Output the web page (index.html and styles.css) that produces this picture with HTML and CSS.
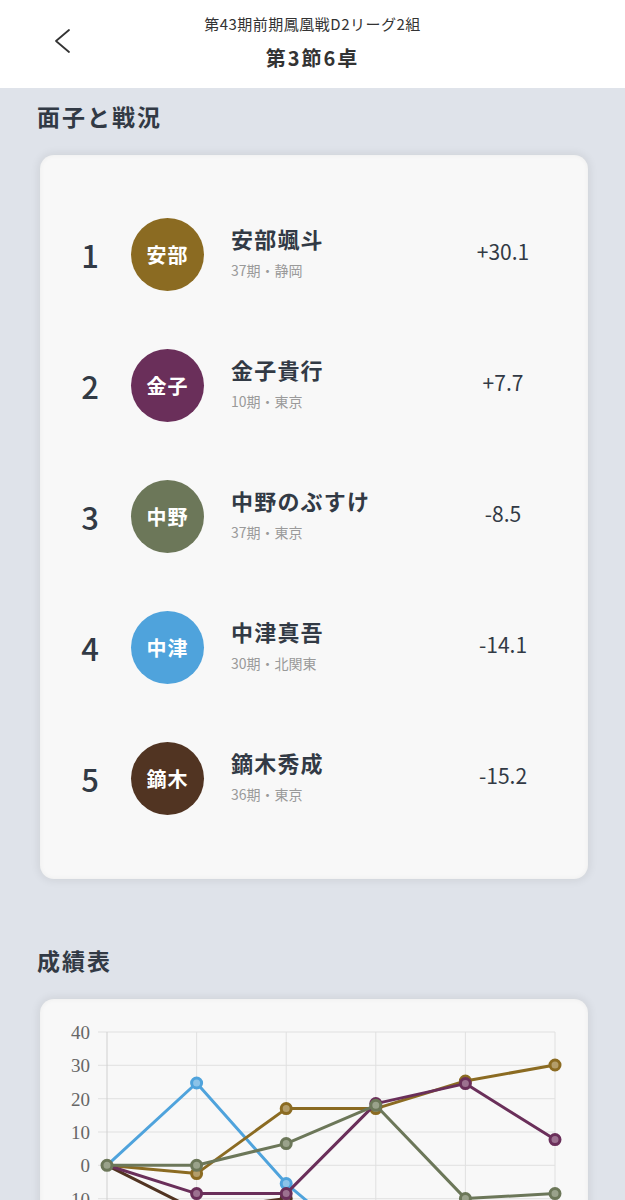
FILE: index.html
```html
<!DOCTYPE html>
<html lang="ja">
<head>
  <meta charset="UTF-8">
  <title>第3節6卓</title>
  <link rel="stylesheet" href="styles.css">
</head>
<body>

  <header class="top-bar">
    <a class="back" href="#">
      <svg width="24" height="26" viewBox="0 0 24 26">
        <path d="M19 2 L6 13 L19 24" fill="none" stroke="#333" stroke-width="1.8" stroke-linecap="round" stroke-linejoin="round"/>
      </svg>
    </a>
    <div class="titles">
      <p class="sub-title">第43期前期鳳凰戦D2リーグ2組</p>
      <h1 class="main-title">第3節6卓</h1>
    </div>
    <div></div>
  </header>

  <h2 class="section-title">面子と戦況</h2>
  <div class="card players">
    <div class="player">
      <span class="rank">1</span>
      <span class="avatar c-gold">安部</span>
      <div class="info">
        <p class="name">安部颯斗</p>
        <p class="meta">37期・静岡</p>
      </div>
      <span class="score">+30.1</span>
    </div>
    <div class="player">
      <span class="rank">2</span>
      <span class="avatar c-purple">金子</span>
      <div class="info">
        <p class="name">金子貴行</p>
        <p class="meta">10期・東京</p>
      </div>
      <span class="score">+7.7</span>
    </div>
    <div class="player">
      <span class="rank">3</span>
      <span class="avatar c-olive">中野</span>
      <div class="info">
        <p class="name">中野のぶすけ</p>
        <p class="meta">37期・東京</p>
      </div>
      <span class="score">-8.5</span>
    </div>
    <div class="player">
      <span class="rank">4</span>
      <span class="avatar c-blue">中津</span>
      <div class="info">
        <p class="name">中津真吾</p>
        <p class="meta">30期・北関東</p>
      </div>
      <span class="score">-14.1</span>
    </div>
    <div class="player">
      <span class="rank">5</span>
      <span class="avatar c-brown">鏑木</span>
      <div class="info">
        <p class="name">鏑木秀成</p>
        <p class="meta">36期・東京</p>
      </div>
      <span class="score">-15.2</span>
    </div>
  </div>

  <h2 class="section-title second">成績表</h2>
  <div class="card chart-card">
    <svg class="chart" width="549" height="340" viewBox="0 0 549 340">
      <g stroke="#e0e0e0" stroke-width="1">
        <line x1="58" y1="33" x2="515" y2="33"/>
        <line x1="58" y1="66.3" x2="515" y2="66.3"/>
        <line x1="58" y1="99.7" x2="515" y2="99.7"/>
        <line x1="58" y1="133" x2="515" y2="133"/>
        <line x1="58" y1="166.3" x2="515" y2="166.3"/>
        <line x1="58" y1="199.7" x2="515" y2="199.7"/>
        <line x1="58" y1="233" x2="515" y2="233"/>
        <line x1="58" y1="266.3" x2="515" y2="266.3"/>
        <line x1="58" y1="299.7" x2="515" y2="299.7"/>
        <line x1="156.6" y1="33" x2="156.6" y2="308"/>
        <line x1="246.2" y1="33" x2="246.2" y2="308"/>
        <line x1="335.8" y1="33" x2="335.8" y2="308"/>
        <line x1="425.4" y1="33" x2="425.4" y2="308"/>
        <line x1="515" y1="33" x2="515" y2="308"/>
      </g>
      <line x1="67" y1="33" x2="67" y2="308" stroke="#d0d0d0" stroke-width="1"/>
      <g class="y-labels">
        <text x="50" y="40">40</text>
        <text x="50" y="73.3">30</text>
        <text x="50" y="106.7">20</text>
        <text x="50" y="140">10</text>
        <text x="50" y="173.3">0</text>
        <text x="50" y="206.7">-10</text>
        <text x="50" y="240">-20</text>
        <text x="50" y="273.3">-30</text>
        <text x="50" y="306.7">-40</text>
      </g>

      <g class="series" stroke="#4fa3dc" fill="#8cc3e8">
        <polyline fill="none" points="67,166.3 156.6,84 246.2,184.6 335.8,259.6 425.4,233 515,213.3"/>
        <circle cx="156.6" cy="84" r="5"/>
        <circle cx="246.2" cy="184.6" r="5"/>
        <circle cx="335.8" cy="259.6" r="5"/>
        <circle cx="425.4" cy="233" r="5"/>
        <circle cx="515" cy="213.3" r="5"/>
      </g>
      <g class="series" stroke="#513422" fill="#8a776b">
        <polyline fill="none" points="67,166.3 156.6,211.3 246.2,199.6 335.8,251.3 425.4,232.3 515,217"/>
        <circle cx="156.6" cy="211.3" r="5"/>
        <circle cx="246.2" cy="199.6" r="5"/>
        <circle cx="335.8" cy="251.3" r="5"/>
        <circle cx="425.4" cy="232.3" r="5"/>
        <circle cx="515" cy="217" r="5"/>
      </g>
      <g class="series" stroke="#8b6b22" fill="#b39d6a">
        <polyline fill="none" points="67,166.3 156.6,174.6 246.2,109.6 335.8,109.6 425.4,82 515,66"/>
        <circle cx="156.6" cy="174.6" r="5"/>
        <circle cx="246.2" cy="109.6" r="5"/>
        <circle cx="335.8" cy="109.6" r="5"/>
        <circle cx="425.4" cy="82" r="5"/>
        <circle cx="515" cy="66" r="5"/>
      </g>
      <g class="series" stroke="#6a2f5a" fill="#9c7190">
        <polyline fill="none" points="67,166.3 156.6,194.6 246.2,194.6 335.8,104.6 425.4,84.6 515,140.6"/>
        <circle cx="156.6" cy="194.6" r="5"/>
        <circle cx="246.2" cy="194.6" r="5"/>
        <circle cx="335.8" cy="104.6" r="5"/>
        <circle cx="425.4" cy="84.6" r="5"/>
        <circle cx="515" cy="140.6" r="5"/>
      </g>
      <g class="series" stroke="#6c7759" fill="#9aa28b">
        <polyline fill="none" points="67,166.3 156.6,166.3 246.2,144.6 335.8,106.3 425.4,199.6 515,194.6"/>
        <circle cx="67" cy="166.3" r="5"/>
        <circle cx="156.6" cy="166.3" r="5"/>
        <circle cx="246.2" cy="144.6" r="5"/>
        <circle cx="335.8" cy="106.3" r="5"/>
        <circle cx="425.4" cy="199.6" r="5"/>
        <circle cx="515" cy="194.6" r="5"/>
      </g>
    </svg>
  </div>

</body>
</html>
```

FILE: styles.css
```css
body {
  margin: 0;
  background-color: #dfe3ea;
  font-family: "Noto Sans CJK JP", "Noto Sans", sans-serif;
  color: #323a45;
}
p, h1, h2 {
  margin: 0;
}
.top-bar {
  display: grid;
  grid-template-columns: 1fr auto 1fr;
  align-items: center;
  height: 88px;
  background: white;
}
.back {
  display: block;
  width: 24px;
  height: 26px;
  margin: 0 0 6px 50px;
}
.titles {
  text-align: center;
  padding-bottom: 4px;
}
.sub-title {
  font-size: 15px;
  line-height: 20px;
  letter-spacing: 0.5px;
  color: #333;
}
.main-title {
  margin-top: 12px;
  font-size: 20px;
  line-height: 24px;
  font-weight: bold;
  letter-spacing: 2px;
  color: #333;
}
.section-title {
  margin: 12px 0 23px 37px;
  font-size: 23px;
  line-height: 32px;
  font-weight: bold;
  letter-spacing: 2px;
}
.section-title.second {
  margin-top: 65px;
}
.card {
  margin: 0 37px 0 40px;
  background: #f8f8f8;
  border-radius: 14px;
  box-shadow: 0 0 8px 2px rgba(0, 0, 0, 0.07), inset 0 0 5px rgba(0, 0, 0, 0.05);
}
.players {
  padding: 34px 35px 35px 30px;
}
.player {
  display: flex;
  align-items: center;
  height: 131px;
}
.rank {
  width: 40px;
  text-align: center;
  font-size: 31px;
  font-weight: 500;
}
.avatar {
  display: flex;
  align-items: center;
  justify-content: center;
  width: 73px;
  height: 73px;
  margin-left: 21px;
  border-radius: 50%;
  color: white;
  font-size: 20px;
  font-weight: bold;
  letter-spacing: 1px;
}
.c-gold { background: #8b6b22; }
.c-purple { background: #6a2f5a; }
.c-olive { background: #6c7759; }
.c-blue { background: #4fa3dc; }
.c-brown { background: #513422; }
.info {
  flex: 1;
  margin-left: 27px;
  padding-bottom: 6px;
}
.name {
  font-size: 22px;
  line-height: 30px;
  font-weight: bold;
  letter-spacing: 1.2px;
}
.meta {
  margin-top: 6px;
  font-size: 14px;
  line-height: 22px;
  color: #9a9a9a;
}
.score {
  width: 100px;
  text-align: center;
  font-size: 21px;
  margin-bottom: 8px;
}
.chart-card {
  height: 340px;
}
.chart {
  display: block;
}
.y-labels text {
  font-family: "Liberation Serif", serif;
  font-size: 19px;
  fill: #666;
  text-anchor: end;
}
.series {
  stroke-width: 3;
  stroke-linejoin: round;
}
```
